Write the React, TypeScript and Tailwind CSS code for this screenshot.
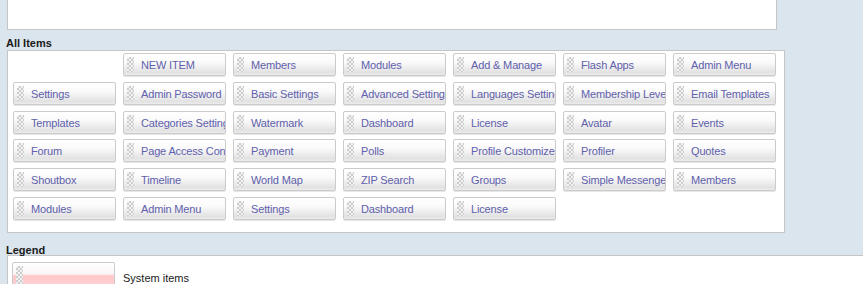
import React from "react";

const rows: (string | null)[][] = [
	[null, "NEW ITEM", "Members", "Modules", "Add & Manage", "Flash Apps", "Admin Menu"],
	["Settings", "Admin Password", "Basic Settings", "Advanced Settings", "Languages Settings", "Membership Levels", "Email Templates"],
	["Templates", "Categories Settings", "Watermark", "Dashboard", "License", "Avatar", "Events"],
	["Forum", "Page Access Control", "Payment", "Polls", "Profile Customize", "Profiler", "Quotes"],
	["Shoutbox", "Timeline", "World Map", "ZIP Search", "Groups", "Simple Messenger", "Members"],
	["Modules", "Admin Menu", "Settings", "Dashboard", "License"],
];

function Handle() {
	return (
		<span className="absolute left-[3px] top-[3px] bottom-[3px] w-[7px] bg-[repeating-conic-gradient(#cdcdcd_0_25%,#f2f2f2_0_50%)] bg-[length:4px_4px]" />
	);
}

function ItemButton({ title }: { title: string }) {
	return (
		<div className="relative h-[23px] w-[103px] rounded-[2px] border border-[#cbcbcb] bg-[linear-gradient(to_bottom,#ffffff_0%,#fafafa_40%,#ebebeb_70%,#e2e2e2_88%,#ececec_100%)] shadow-[0_1px_0_#e6e6e6]">
			<Handle />
			<div className="overflow-hidden whitespace-nowrap pl-[17px] pr-[2px] pt-[1px] text-[11px] leading-[21px] tracking-[-0.15px] text-[#6060ac]">
				{title}
			</div>
		</div>
	);
}

export default function App() {
	return (
		<div className="h-[284px] overflow-hidden bg-[#dbe5ee] font-['Liberation_Sans',Arial,sans-serif] text-[#1a1a1a]">
			<div className="ml-[7px] h-[30px] w-[770px] border border-t-0 border-[#c6c6c6] bg-white" />

			<div className="h-[20px] pl-[6px] pt-[7px] text-[11px] font-bold leading-[13px]">All Items</div>

			<div className="ml-[7px] w-[778px] border border-[#c6c6c6] bg-white pb-[12px] pl-[5px] pt-[2px]">
				<div className="grid grid-cols-[repeat(7,103px)] gap-x-[7px] gap-y-[5.8px]">
					{rows.flat().map((title, i) =>
						title ? <ItemButton key={i} title={title} /> : <div key={i} />
					)}
				</div>
			</div>

			<div className="h-[22px] pl-[6px] pt-[12px] text-[11px] font-bold leading-[11px]">Legend</div>

			<div className="ml-[7px] flex items-start gap-[8px] border-l border-t border-[#c6c6c6] bg-white pl-[4px] pt-[6px]">
				<div className="relative h-[28px] w-[103px] rounded-[2px] border border-[#cbcbcb] bg-[linear-gradient(to_bottom,#ffffff_0px,#fbf5f7_11px,#ffc6c8_13px,#ffd6d8_100%)]">
					<Handle />
				</div>
				<div className="pt-[10px] text-[11px] leading-[13px]">System items</div>
			</div>
		</div>
	);
}
